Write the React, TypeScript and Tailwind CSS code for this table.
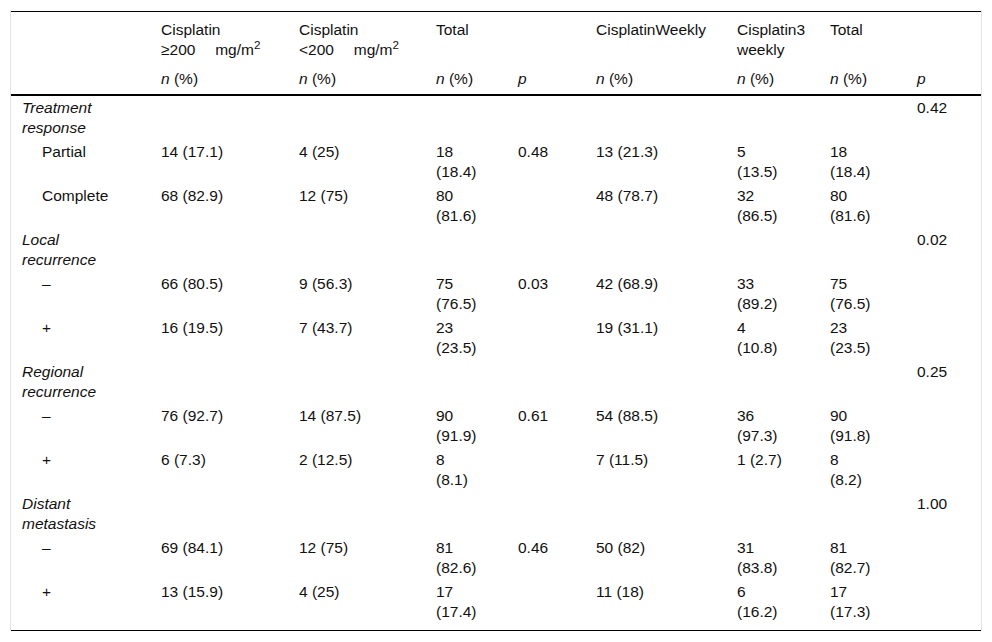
/* Outcome table: cisplatin dose and schedule */

type Row = {
  label: string;
  group?: boolean;
  cells: string[];
};

const rows: Row[] = [
  { label: "Treatment\nresponse", group: true, cells: ["", "", "", "", "", "", "", "0.42"] },
  { label: "Partial", cells: ["14 (17.1)", "4 (25)", "18\n(18.4)", "0.48", "13 (21.3)", "5\n(13.5)", "18\n(18.4)", ""] },
  { label: "Complete", cells: ["68 (82.9)", "12 (75)", "80\n(81.6)", "", "48 (78.7)", "32\n(86.5)", "80\n(81.6)", ""] },
  { label: "Local\nrecurrence", group: true, cells: ["", "", "", "", "", "", "", "0.02"] },
  { label: "–", cells: ["66 (80.5)", "9 (56.3)", "75\n(76.5)", "0.03", "42 (68.9)", "33\n(89.2)", "75\n(76.5)", ""] },
  { label: "+", cells: ["16 (19.5)", "7 (43.7)", "23\n(23.5)", "", "19 (31.1)", "4\n(10.8)", "23\n(23.5)", ""] },
  { label: "Regional\nrecurrence", group: true, cells: ["", "", "", "", "", "", "", "0.25"] },
  { label: "–", cells: ["76 (92.7)", "14 (87.5)", "90\n(91.9)", "0.61", "54 (88.5)", "36\n(97.3)", "90\n(91.8)", ""] },
  { label: "+", cells: ["6 (7.3)", "2 (12.5)", "8\n(8.1)", "", "7 (11.5)", "1 (2.7)", "8\n(8.2)", ""] },
  { label: "Distant\nmetastasis", group: true, cells: ["", "", "", "", "", "", "", "1.00"] },
  { label: "–", cells: ["69 (84.1)", "12 (75)", "81\n(82.6)", "0.46", "50 (82)", "31\n(83.8)", "81\n(82.7)", ""] },
  { label: "+", cells: ["13 (15.9)", "4 (25)", "17\n(17.4)", "", "11 (18)", "6\n(16.2)", "17\n(17.3)", ""] },
];

const widths = [140, 138, 137, 82, 78, 141, 93, 87, 74];

function NPct() {
  return (
    <>
      <i>n</i> (%)
    </>
  );
}

export default function App() {
  const th1 = "pl-[10px] pt-[8px] pb-[4px] text-left align-top font-normal";
  const th2 = "pl-[10px] pt-[5px] pb-[5px] text-left align-top font-normal border-b-2 border-black";

  return (
    <div
      className="min-h-[642px] bg-white text-[#111] text-[15.5px] leading-[20px]"
      style={{ fontFamily: '"Liberation Sans", Arial, sans-serif' }}
    >
      <div className="mx-[10px] mt-[10px] border-x border-[#e4e4e4] pt-px">
        <table className="w-full table-fixed border-separate border-spacing-0 border-t border-b border-black">
          <colgroup>
            {widths.map((w, i) => (
              <col key={i} style={{ width: w }} />
            ))}
          </colgroup>
          <thead>
            <tr>
              <th className={th1}></th>
              <th className={th1}>
                Cisplatin
                <br />
                ≥200{"\u2003 "}mg/m<sup>2</sup>
              </th>
              <th className={th1}>
                Cisplatin
                <br />
                &lt;200{"\u2003 "}mg/m<sup>2</sup>
              </th>
              <th className={th1}>Total</th>
              <th className={th1}></th>
              <th className={th1}>CisplatinWeekly</th>
              <th className={th1}>
                Cisplatin3
                <br />
                weekly
              </th>
              <th className={th1}>Total</th>
              <th className={th1}></th>
            </tr>
            <tr>
              <th className={th2}></th>
              <th className={th2}>
                <NPct />
              </th>
              <th className={th2}>
                <NPct />
              </th>
              <th className={th2}>
                <NPct />
              </th>
              <th className={th2}>
                <i>p</i>
              </th>
              <th className={th2}>
                <NPct />
              </th>
              <th className={th2}>
                <NPct />
              </th>
              <th className={th2}>
                <NPct />
              </th>
              <th className={th2}>
                <i>p</i>
              </th>
            </tr>
          </thead>
          <tbody>
            {rows.map((r, ri) => {
              const last = ri === rows.length - 1;
              const py = last ? "pt-[2px] pb-[8px]" : "py-[2px]";
              return (
                <tr key={ri}>
                  <td
                    className={`${py} align-top whitespace-pre-line ${
                      r.group ? "pl-[11px] italic" : "pl-[31px]"
                    }`}
                  >
                    {r.label}
                  </td>
                  {r.cells.map((c, ci) => (
                    <td key={ci} className={`${py} pl-[10px] align-top whitespace-pre-line`}>
                      {c}
                    </td>
                  ))}
                </tr>
              );
            })}
          </tbody>
        </table>
      </div>
    </div>
  );
}
